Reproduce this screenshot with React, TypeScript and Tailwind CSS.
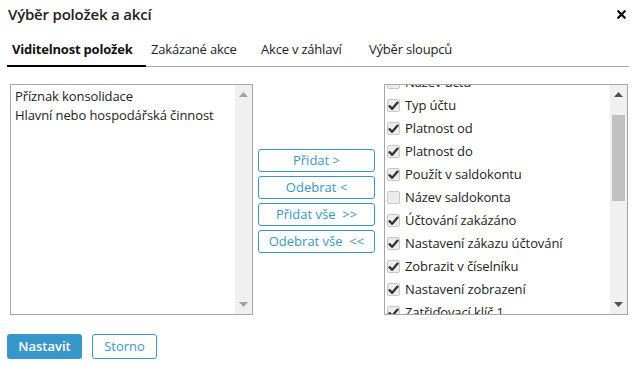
import { X } from 'lucide-react';

const leftItems = ['Příznak konsolidace', 'Hlavní nebo hospodářská činnost'];

const rightItems: { label: string; checked: boolean }[] = [
  { label: 'Název účtu', checked: false },
  { label: 'Typ účtu', checked: true },
  { label: 'Platnost od', checked: true },
  { label: 'Platnost do', checked: true },
  { label: 'Použít v saldokontu', checked: true },
  { label: 'Název saldokonta', checked: false },
  { label: 'Účtování zakázáno', checked: true },
  { label: 'Nastavení zákazu účtování', checked: true },
  { label: 'Zobrazit v číselníku', checked: true },
  { label: 'Nastavení zobrazení', checked: true },
  { label: 'Zatřiďovací klíč 1', checked: true },
];

const tabs = ['Viditelnost položek', 'Zakázané akce', 'Akce v záhlaví', 'Výběr sloupců'];

export default function App() {
  return (
    <div className="w-[638px] h-[365px] bg-white text-[#222] font-['Open_Sans',sans-serif] overflow-hidden relative">
      <div className="flex items-center justify-between pl-[8px] pr-[10px] pt-[3px] h-[26px]">
        <h1 className="text-[15px] font-semibold tracking-[-0.2px]">Výběr položek a akcí</h1>
        <X className="w-[13px] h-[13px] text-black" strokeWidth={4} />
      </div>

      <div className="mt-[14px] mx-[7px] flex border-b border-[#aaa] h-[27px] w-[622px]">
        {tabs.map((t, i) => (
          <div
            key={t}
            className={
              i === 0
                ? 'px-[5px] w-[139px] font-bold text-[13px] text-[#111] border-b-2 border-black -mb-[1px] tracking-[-0.2px]'
                : 'px-[5px] text-[13px] text-[#222] tracking-[-0.2px] ' + (i === 1 ? 'w-[110px]' : i === 2 ? 'w-[108px]' : '')
            }
          >
            {t}
          </div>
        ))}
      </div>

      <div className="flex mt-[17px] ml-[10px]">
        <ListBox width="w-[243px]">
          <div className="pl-[4px] pt-[2px]">
            {leftItems.map((it) => (
              <div key={it} className="text-[13px] leading-[19px] text-[#222] tracking-[-0.1px]">{it}</div>
            ))}
          </div>
        </ListBox>

        <div className="flex flex-col gap-[4px] mt-[65px] ml-[5px] mr-[9px]">
          <MoveButton label="Přidat >" />
          <MoveButton label="Odebrat <" />
          <MoveButton label={'Přidat vše\u00a0\u00a0>>'} />
          <MoveButton label={'Odebrat vše\u00a0\u00a0<<'} />
        </div>

        <ListBox width="w-[244px]" thumb>
          <div className="-mt-[14px]">
            {rightItems.map((it) => (
              <div key={it.label} className="flex items-center h-[23px] pl-[2px]">
                <Checkbox checked={it.checked} />
                <span className="ml-[5px] text-[13px] text-[#222] tracking-[-0.1px]">{it.label}</span>
              </div>
            ))}
          </div>
        </ListBox>
      </div>

      <div className="flex gap-[10px] mt-[19px] ml-[7px]">
        <button className="h-[25px] w-[75px] rounded-[3px] bg-[#3797cb] text-white text-[13px] font-semibold">Nastavit</button>
        <button className="h-[25px] w-[65px] rounded-[3px] border border-[#3797cb] bg-white text-[#3797cb] text-[13px]">Storno</button>
      </div>
    </div>
  );
}

function ListBox({ width, thumb, children }: { width: string; thumb?: boolean; children: React.ReactNode }) {
  return (
    <div className={`${width} h-[231px] border border-[#a6a6a6] flex bg-white`}>
      <div className="flex-1 overflow-hidden">{children}</div>
      <div className="w-[17px] bg-[#f0f0f0] flex flex-col items-center relative">
        <svg width="9" height="5" viewBox="0 0 9 5" className="mt-[7px]">
          <path d="M0 5 L4.5 0 L9 5 Z" fill={thumb ? '#505050' : '#a3a3a3'} />
        </svg>
        {thumb && <div className="absolute left-[2px] top-[30px] w-[13px] h-[86px] bg-[#c1c1c1]" />}
        <div className="flex-1" />
        <svg width="9" height="5" viewBox="0 0 9 5" className="mb-[7px]">
          <path d="M0 0 L4.5 5 L9 0 Z" fill={thumb ? '#505050' : '#a3a3a3'} />
        </svg>
      </div>
    </div>
  );
}

function MoveButton({ label }: { label: string }) {
  return (
    <button className="w-[117px] h-[23px] rounded-[3px] border border-[#3797cb] bg-white text-[#3797cb] text-[13px] leading-none whitespace-pre">
      {label}
    </button>
  );
}

function Checkbox({ checked }: { checked: boolean }) {
  return (
    <div className="w-[13px] h-[13px] rounded-[2px] border border-[#c8c8c8] bg-[#ececec] flex items-center justify-center">
      {checked && (
        <svg width="11" height="10" viewBox="0 0 11 10">
          <path d="M1.5 5.2 L4.2 7.8 L9.6 1.6" fill="none" stroke="#333" strokeWidth="2.3" strokeLinecap="round" strokeLinejoin="round" />
        </svg>
      )}
    </div>
  );
}
